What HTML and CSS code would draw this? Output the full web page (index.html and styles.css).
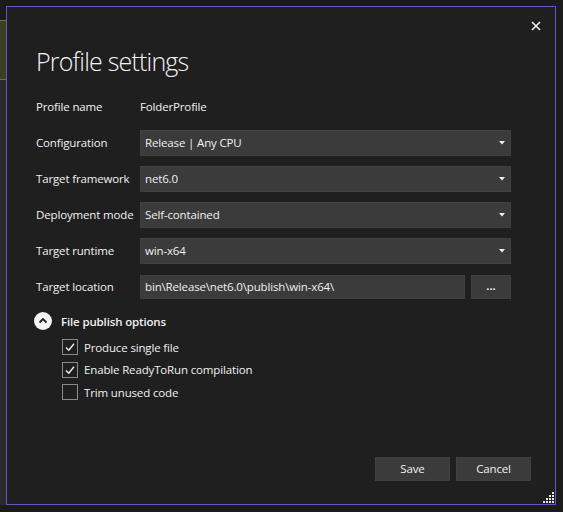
FILE: index.html
```html
<!DOCTYPE html>
<html lang="en">
<head>
    <meta charset="UTF-8">
    <title>Profile settings</title>
    <link rel="stylesheet" href="styles.css">
</head>
<body>
    <div class="dialog">
        <button class="close" aria-label="Close">
            <svg width="10" height="10" viewBox="0 0 10 10"><path d="M1 1L9 9M9 1L1 9" stroke="#f0f0f0" stroke-width="1.6" fill="none"/></svg>
        </button>

        <h1 class="title">Profile settings</h1>

        <div class="form">
            <div class="row">
                <span class="label">Profile name</span>
                <span class="value">FolderProfile</span>
            </div>
            <div class="row">
                <span class="label">Configuration</span>
                <div class="select"><span>Release | Any CPU</span><svg class="arrow" width="6" height="4" viewBox="0 0 6 4"><path d="M0 0H6L3 3.5Z" fill="#f0f0f0"/></svg></div>
            </div>
            <div class="row">
                <span class="label">Target framework</span>
                <div class="select"><span>net6.0</span><svg class="arrow" width="6" height="4" viewBox="0 0 6 4"><path d="M0 0H6L3 3.5Z" fill="#f0f0f0"/></svg></div>
            </div>
            <div class="row">
                <span class="label">Deployment mode</span>
                <div class="select"><span>Self-contained</span><svg class="arrow" width="6" height="4" viewBox="0 0 6 4"><path d="M0 0H6L3 3.5Z" fill="#f0f0f0"/></svg></div>
            </div>
            <div class="row">
                <span class="label">Target runtime</span>
                <div class="select"><span>win-x64</span><svg class="arrow" width="6" height="4" viewBox="0 0 6 4"><path d="M0 0H6L3 3.5Z" fill="#f0f0f0"/></svg></div>
            </div>
            <div class="row">
                <span class="label">Target location</span>
                <div class="path-field">
                    <div class="textbox">bin\Release\net6.0\publish\win-x64\</div>
                    <button class="browse">...</button>
                </div>
            </div>
        </div>

        <div class="section-head">
            <svg class="chevron" width="18" height="18" viewBox="0 0 18 18"><circle cx="9" cy="9" r="9" fill="#f4f4f4"/><path d="M5.5 10.5L9 7L12.5 10.5" stroke="#1f1f1f" stroke-width="1.8" fill="none"/></svg>
            <span>File publish options</span>
        </div>

        <div class="options">
            <label class="check"><span class="box"><svg width="12" height="12" viewBox="0 0 12 12"><path d="M2 6.5L4.8 9.2L10 2.8" stroke="#f0f0f0" stroke-width="1.4" fill="none"/></svg></span>Produce single file</label>
            <label class="check"><span class="box"><svg width="12" height="12" viewBox="0 0 12 12"><path d="M2 6.5L4.8 9.2L10 2.8" stroke="#f0f0f0" stroke-width="1.4" fill="none"/></svg></span>Enable ReadyToRun compilation</label>
            <label class="check"><span class="box"></span>Trim unused code</label>
        </div>

        <div class="footer">
            <button class="btn">Save</button>
            <button class="btn">Cancel</button>
        </div>

        <svg class="grip" width="12" height="12" viewBox="0 0 12 12" fill="#e8e8e8">
            <rect x="10" y="1" width="2" height="2"/>
            <rect x="7" y="4" width="2" height="2"/><rect x="10" y="4" width="2" height="2"/>
            <rect x="4" y="7" width="2" height="2"/><rect x="7" y="7" width="2" height="2"/><rect x="10" y="7" width="2" height="2"/>
            <rect x="1" y="10" width="2" height="2"/><rect x="4" y="10" width="2" height="2"/><rect x="7" y="10" width="2" height="2"/><rect x="10" y="10" width="2" height="2"/>
        </svg>
    </div>
</body>
</html>
```

FILE: styles.css
```css
/* IDE window behind the dialog */
body {
    margin: 0;
    padding: 6px 0 0 6px;
    font-family: 'Open Sans', 'Noto Sans', sans-serif;
    font-size: 11.5px;
    letter-spacing: -0.15px;
    color: #f1f1f1;
    background:
        linear-gradient(to bottom,
            #1b1b1b 0 20px,
            #6b7446 20px 21px,
            #3a3f22 21px 79px,
            #6b7446 79px 80px,
            #2a2a2a 80px 505px,
            #1b1b1b 505px) no-repeat 0 0 / 6px 100%,
        #1b1b1b;
}

.dialog {
    position: relative;
    box-sizing: border-box;
    width: 550px;
    height: 499px;
    display: flex;
    flex-direction: column;
    padding: 0 24px 23px 29px;
    background-color: #1f1f1f;
    border: 1px solid #6656c4;
}

.close {
    position: absolute;
    top: 14px;
    right: 14px;
    width: 10px;
    height: 10px;
    padding: 0;
    border: none;
    background: none;
    display: flex;
}

.title {
    margin: 37px 0 16px;
    font-size: 25px;
    line-height: 34px;
    font-weight: 300;
    letter-spacing: -0.8px;
    color: #f4f4f4;
}

.form {
    display: flex;
    flex-direction: column;
    gap: 10px;
    margin-right: 20px;
}

.row {
    display: grid;
    grid-template-columns: 104px 1fr;
    align-items: center;
    height: 26px;
}

.label,
.value {
    white-space: nowrap;
    padding-bottom: 2px;
}

.select {
    display: flex;
    align-items: center;
    justify-content: space-between;
    height: 26px;
    box-sizing: border-box;
    padding: 0 5px 2px 4px;
    background-color: #3b3b3b;
    border: 1px solid #404040;
}

.arrow {
    margin-top: 2px;
}

.path-field {
    display: flex;
    gap: 6px;
}

.textbox {
    flex: 1;
    display: flex;
    align-items: center;
    height: 24px;
    box-sizing: border-box;
    padding: 0 4px 2px;
    background-color: #3b3b3b;
    border: 1px solid #404040;
}

.browse {
    width: 40px;
    height: 24px;
    padding: 0 0 3px;
    font-family: inherit;
    font-size: 11px;
    font-weight: 700;
    color: #f1f1f1;
    background-color: #3b3b3b;
    border: 1px solid #404040;
}

.section-head {
    display: flex;
    align-items: center;
    gap: 9px;
    height: 20px;
    margin: 11px 0 0 -2px;
    font-weight: 600;
}

.options {
    display: flex;
    flex-direction: column;
    margin-top: 5px;
    padding-left: 26px;
}

.check {
    display: flex;
    align-items: center;
    gap: 6px;
    height: 22.5px;
}

.box {
    width: 16px;
    height: 16px;
    box-sizing: border-box;
    display: flex;
    align-items: center;
    justify-content: center;
    border: 1px solid #8a8a8a;
    background-color: #1f1f1f;
}

.footer {
    display: flex;
    justify-content: flex-end;
    gap: 6px;
    margin-top: auto;
}

.btn {
    width: 75px;
    height: 24px;
    padding: 0 0 2px;
    font-family: inherit;
    font-size: 11.5px;
    letter-spacing: -0.15px;
    color: #f1f1f1;
    background-color: #3b3b3b;
    border: 1px solid #404040;
}

.grip {
    position: absolute;
    right: 1px;
    bottom: 1px;
}
```
